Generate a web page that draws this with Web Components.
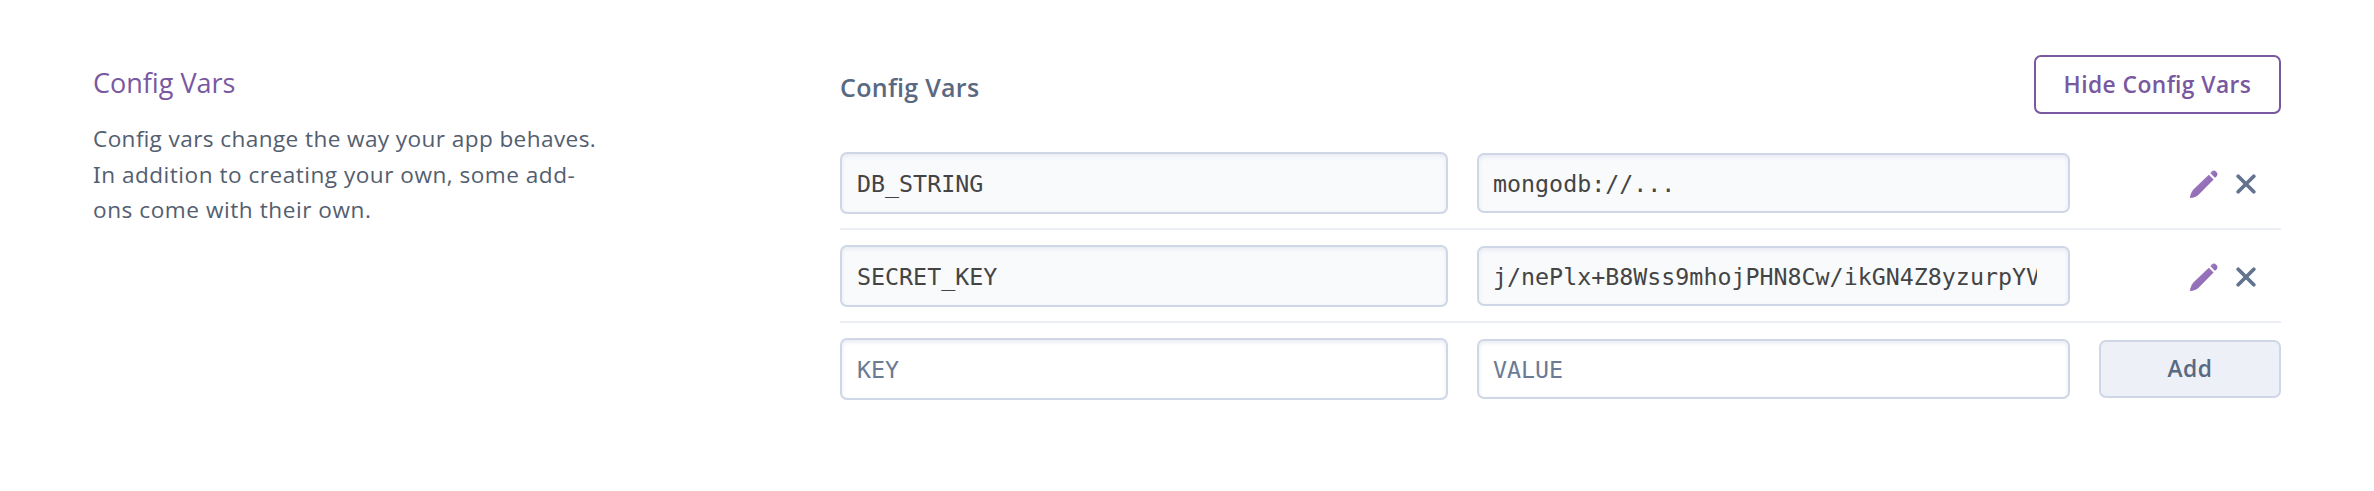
<!DOCTYPE html>
<html lang="en">
<head>
<meta charset="utf-8">
<title>Config Vars</title>
<style>
html,body{margin:0;background:#fff}
body{width:2374px;height:491px;overflow:hidden;font-family:"Open Sans","Noto Sans",sans-serif}
.l1{letter-spacing:.4px}.l2{letter-spacing:.5px}.l3{letter-spacing:.55px}
.cap{font-family:"Noto Sans",sans-serif;line-height:1}
</style>
</head>
<body>
<config-section>
  <section-intro slot="intro">
    <span slot="title">Config Vars</span>
    <span class="l1">Config vars change the way your app behaves.</span><br><span class="l2"><span class="cap">I</span>n addition to creating your own, some add-</span><br><span class="l3">ons come with their own.</span>
  </section-intro>
  <panel-head slot="panel">Config Vars<ui-button slot="action" kind="outline">Hide Config Vars</ui-button></panel-head>
  <var-row slot="panel">
    <text-field slot="key">DB_STRING</text-field>
    <text-field slot="value" compact>mongodb://...</text-field>
    <row-actions slot="actions"></row-actions>
  </var-row>
  <var-row slot="panel">
    <text-field slot="key">SECRET_KEY</text-field>
    <text-field slot="value" compact>j/nePlx+B8Wss9mhojPHN8Cw/ikGN4Z8yzurpYV</text-field>
    <row-actions slot="actions"></row-actions>
  </var-row>
  <var-row slot="panel" last>
    <text-field slot="key" empty>KEY</text-field>
    <text-field slot="value" compact empty>VALUE</text-field>
    <ui-button slot="actions" kind="soft">Add</ui-button>
  </var-row>
</config-section>
<script>
const define = (name, html) => customElements.define(name, class extends HTMLElement {
  constructor() {
    super();
    this.attachShadow({ mode: 'open' }).innerHTML = html;
  }
});

define('config-section', `
<style>
:host{display:grid;grid-template-columns:747px 1441px;padding:55px 93px 0;box-sizing:border-box}
.panel{display:flex;flex-direction:column}
</style>
<slot name="intro"></slot><div class="panel"><slot name="panel"></slot></div>`);

define('section-intro', `
<style>
:host{display:block;color:#535e6f}
h2{margin:8px 0 18px;font-size:27px;line-height:40px;font-weight:400;color:#79589f;letter-spacing:0;font-feature-settings:"liga" 1}
p{margin:0;font-size:22.6px;line-height:35.7px;white-space:nowrap;font-feature-settings:"liga" 1}
</style>
<h2><slot name="title"></slot></h2><p><slot></slot></p>`);

define('panel-head', `
<style>
:host{display:flex;justify-content:space-between;align-items:flex-start;height:82px}
h3{margin:13px 0 0;font:600 25px/38px "Open Sans",sans-serif;letter-spacing:.3px;color:#596981;font-feature-settings:"liga" 1}
</style>
<h3><slot></slot></h3><slot name="action"></slot>`);

define('var-row', `
<style>
:host{display:grid;grid-template-columns:608px 593px 182px;column-gap:29px;align-items:center;height:93px;box-sizing:border-box;border-bottom:2px solid #ebeef4}
:host([last]){border-color:transparent}
</style>
<slot name="key"></slot><slot name="value"></slot><slot name="actions"></slot>`);

define('text-field', `
<style>
:host{display:flex;align-items:center;box-sizing:border-box;height:62px;padding:2px 15px 0;border:2px solid #cfd7e6;border-radius:7px;background:#f9fafc;box-shadow:inset 0 2px 4px #e6eaf2;color:#444;font:23.3px/30px "DejaVu Sans Mono",monospace}
:host([compact]){height:60px;padding-left:14px;padding-right:31px}
:host([empty]){background:#fff;color:#6b7b94}
span{display:block;flex:1;min-width:0;overflow:hidden;white-space:nowrap}
</style>
<span><slot></slot></span>`);

define('ui-button', `
<style>
:host{display:block}
button{display:block;width:100%;margin:0;box-sizing:border-box;height:59px;padding:0;border-radius:7px;font:600 22.8px/30px "Open Sans",sans-serif;letter-spacing:.45px;font-feature-settings:"liga" 1;white-space:nowrap}
:host([kind=outline]){width:247px}
:host([kind=outline]) button{border:2px solid #79589f;background:#fff;color:#79589f}
:host([kind=soft]) button{height:58px;border:2px solid #cfd7e6;background:#edf0f6;color:#596981}
</style>
<button><slot></slot></button>`);

define('row-actions', `
<style>
:host{display:flex;align-items:center;justify-content:flex-end;gap:17px;padding:2px 25px 0 0}
svg{display:block}
</style>
<svg width="30" height="30" viewBox="0 0 30 30"><defs><linearGradient id="g" x1="0" y1="0" x2="1" y2="1"><stop stop-color="#a57fc4"/><stop offset="1" stop-color="#8462ad"/></linearGradient></defs><g fill="url(#g)"><path d="M1 29Q1.2 24 4.6 20.2L19.8 5.8 24.6 10.6 9.8 25.4Q6.5 28.6 1 29Z"/><path d="M21.4 4.2 22.7 2.6Q24.9.4 27.3 2.7 29.6 5.1 27.4 7.4L26 8.8Z"/></g></svg>
<svg width="20" height="20" viewBox="0 0 20 20"><path d="M2.2 2.2 17.8 17.8M17.8 2.2 2.2 17.8" fill="none" stroke="#62738d" stroke-width="3.7" stroke-linecap="round"/></svg>`);
</script>
</body>
</html>
